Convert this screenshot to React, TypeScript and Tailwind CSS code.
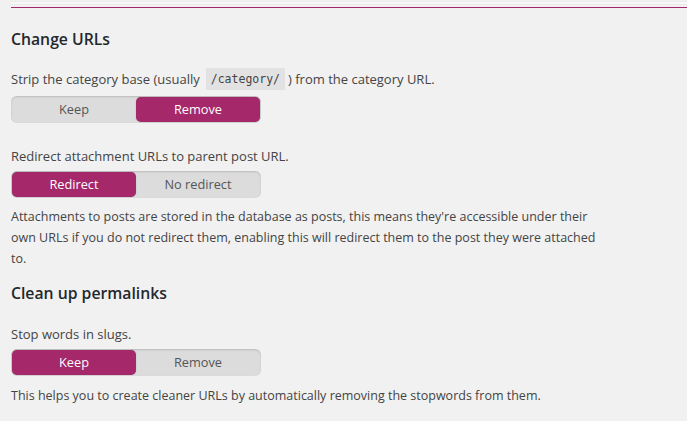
import React from "react";

const font = { fontFamily: "'Open Sans', 'Noto Sans', sans-serif" };

function Toggle({ left, right, active }: { left: string; right: string; active: 0 | 1 }) {
  const seg = (label: string, on: boolean) => (
    <div
      className={
        on
          ? "flex-1 flex items-center justify-center rounded-[5px] bg-[#a4286a] text-white shadow-[0_0_1px_rgba(0,0,0,0.4)]"
          : "flex-1 flex items-center justify-center text-[#555]"
      }
    >
      {label}
    </div>
  );
  return (
    <div className="flex w-[250px] h-[27px] p-[1px] rounded-[6px] bg-[#dcdcdc] shadow-[inset_0_1px_2px_rgba(0,0,0,0.15)] text-[12.75px]">
      {seg(left, active === 0)}
      {seg(right, active === 1)}
    </div>
  );
}

export default function App() {
  return (
    <div className="w-[687px] h-[421px] bg-[#f1f1f1] overflow-hidden text-[#444]" style={font}>
      <div className="h-[7px] pl-[11px] pt-[1px]">
        <div className="h-[4px] bg-[#f7f7f7] border-t border-b border-[#ececec]" />
      </div>
      <div className="ml-[11px] h-[1px] bg-[#a4286a]" />
      <div className="pl-[11px]">
        <h2 className="mt-[19px] h-[24px] leading-[24px] text-[15.75px] font-semibold text-[#23282d]">Change URLs</h2>
        <div className="mt-[18px] h-[20px] leading-[20px] text-[13px] flex items-center">
          <span>Strip the category base (usually</span>
          <code
            className="ml-[6px] mr-[3px] px-[5px] h-[22px] leading-[22px] bg-[#e2e2e2] text-[11.5px] text-[#444]"
            style={{ fontFamily: "'DejaVu Sans Mono', 'Liberation Mono', monospace" }}
          >
            /category/
          </code>
          <span>) from the category URL.</span>
        </div>
        <div className="mt-[7px]">
          <Toggle left="Keep" right="Remove" active={1} />
        </div>
        <div className="mt-[23px] h-[20px] leading-[20px] text-[13px]">Redirect attachment URLs to parent post URL.</div>
        <div className="mt-[5px]">
          <Toggle left="Redirect" right="No redirect" active={0} />
        </div>
        <p className="mt-[8px] w-[600px] leading-[21px] text-[12.5px]">
          Attachments to posts are stored in the database as posts, this means they're accessible under their own URLs if you do not redirect them, enabling this will redirect them to the post they were attached to.
        </p>
        <h2 className="mt-[12px] h-[24px] leading-[24px] text-[15.75px] font-semibold text-[#23282d]">Clean up permalinks</h2>
        <div className="mt-[19px] h-[20px] leading-[20px] text-[13px]">Stop words in slugs.</div>
        <div className="mt-[5px]">
          <Toggle left="Keep" right="Remove" active={0} />
        </div>
        <p className="mt-[10px] h-[20px] leading-[20px] text-[12.5px]">
          This helps you to create cleaner URLs by automatically removing the stopwords from them.
        </p>
      </div>
    </div>
  );
}
